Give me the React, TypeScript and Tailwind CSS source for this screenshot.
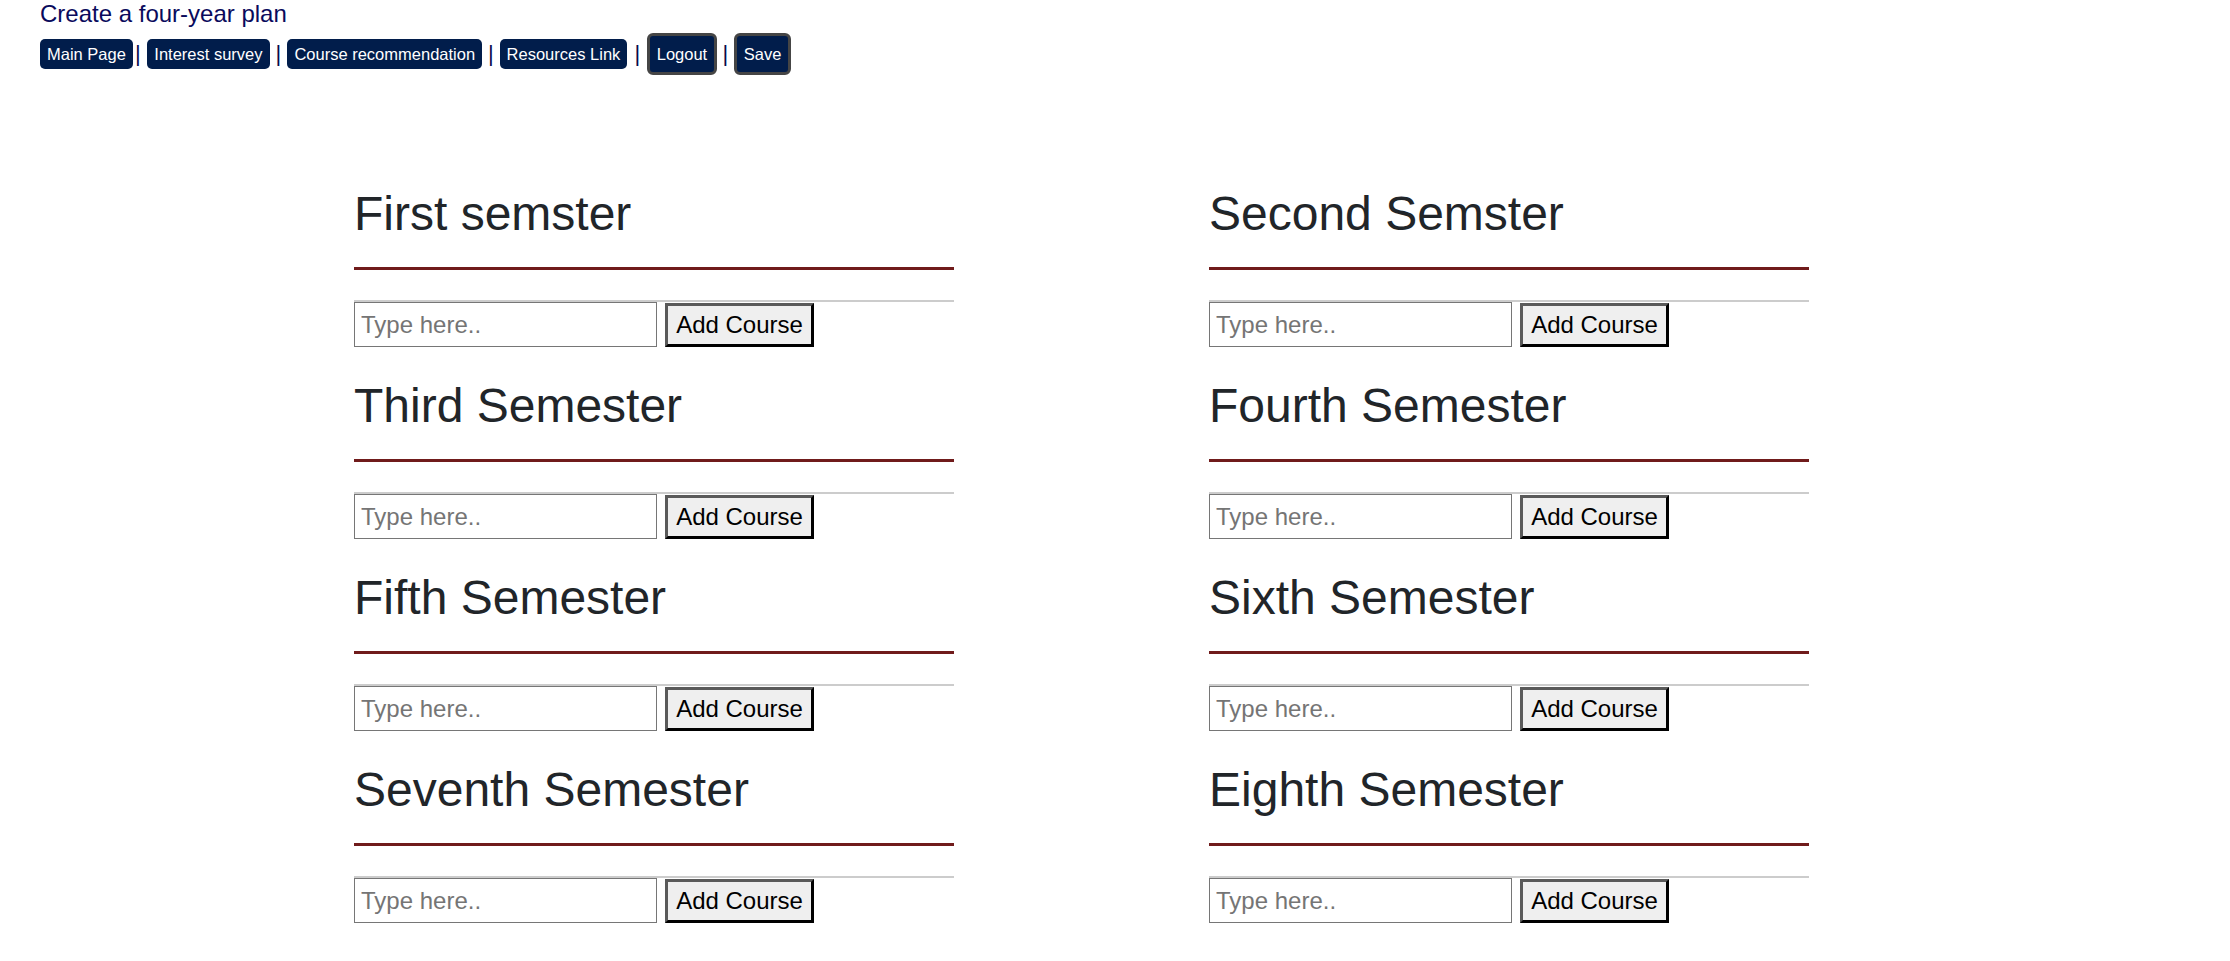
import React from "react";

const semesters = [
  "First semster",
  "Second Semster",
  "Third Semester",
  "Fourth Semester",
  "Fifth Semester",
  "Sixth Semester",
  "Seventh Semester",
  "Eighth Semester",
];

function Sep({ cls }: { cls: string }) {
  return <span className={`text-[22px] leading-[24px] text-[#0a0a4a] ${cls}`}>|</span>;
}

function NavLink({ children }: { children: React.ReactNode }) {
  return (
    <a
      href="#"
      className="inline-block rounded-[5px] bg-[#011d4b] px-[7px] py-[5px] text-white no-underline"
    >
      {children}
    </a>
  );
}

function NavButton({ children }: { children: React.ReactNode }) {
  return (
    <button
      type="button"
      className="rounded-[6px] border-[3px] border-[#454545] bg-[#011d4b] px-[6.5px] py-[8px] text-[16.5px] leading-[20px] text-white"
    >
      {children}
    </button>
  );
}

function Semester({ title }: { title: string }) {
  return (
    <div className="flex w-[600px] flex-col">
      <h2 className="m-0 text-[48px] font-normal leading-[58px] text-[#212529]">{title}</h2>
      <div className="mt-[24px] h-[3px] w-full bg-[#701b1b]" />
      <div className="mt-[30px] h-[2px] w-full bg-[#cccccc]" />
      <div className="flex h-[45px] items-start">
        <input
          type="text"
          placeholder="Type here.."
          className="h-[45px] w-[303px] border border-[#767676] bg-white pl-[6px] text-[24px] text-black outline-none placeholder:text-[#757575]"
        />
        <button
          type="button"
          className="ml-[8px] mt-[1px] h-[44px] w-[149px] border-[3px] border-t-[#5a5a5a] border-l-[#5a5a5a] border-b-black border-r-black bg-[#efefef] text-[24px] leading-[28px] text-black"
        >
          Add Course
        </button>
      </div>
      <div className="h-[30px]" />
    </div>
  );
}

export default function App() {
  return (
    <div
      className="min-h-screen bg-white"
      style={{ fontFamily: '"Liberation Sans", Arial, sans-serif' }}
    >
      <div className="pl-[40px]">
        <div className="text-[24px] leading-[28px] text-[#0a0a5c]">Create a four-year plan</div>
        <div className="mt-[5px] flex items-center text-[16.5px] leading-[20px]">
          <NavLink>Main Page</NavLink>
          <Sep cls="ml-[2.1px] mr-[6.6px]" />
          <NavLink>Interest survey</NavLink>
          <Sep cls="ml-[6.1px] mr-[6.1px]" />
          <NavLink>Course recommendation</NavLink>
          <Sep cls="ml-[5.9px] mr-[5.9px]" />
          <NavLink>Resources Link</NavLink>
          <Sep cls="ml-[7.1px] mr-[7.1px]" />
          <NavButton>Logout</NavButton>
          <Sep cls="ml-[5.9px] mr-[5.9px]" />
          <NavButton>Save</NavButton>
        </div>
      </div>
      <div className="mt-[110px] grid grid-cols-[600px_600px] gap-x-[255px] pl-[354px]">
        {semesters.map((s) => (
          <Semester key={s} title={s} />
        ))}
      </div>
    </div>
  );
}
